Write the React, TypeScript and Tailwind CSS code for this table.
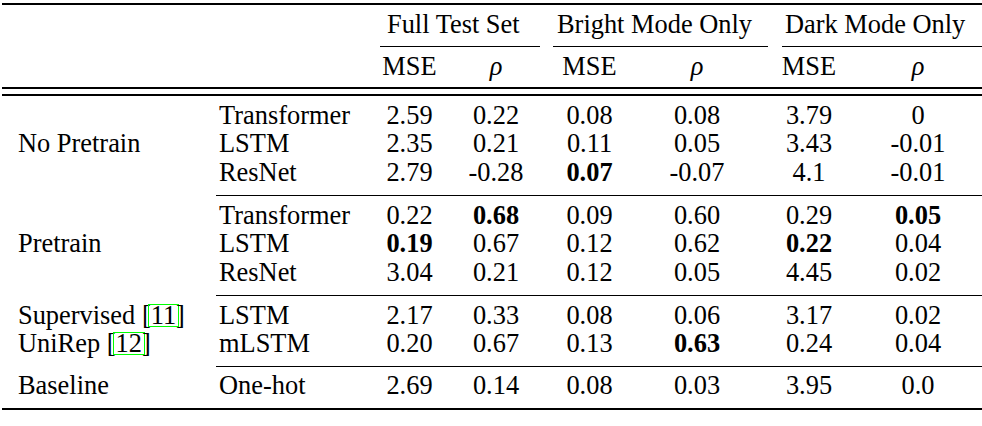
import React from 'react';

// results table: MSE / Spearman rho for each split

type Val = { v: string; bold?: boolean };

const n = (v: string): Val => ({ v });
const b = (v: string): Val => ({ v, bold: true });

interface Row {
  model: string;
  vals: Val[];
}

interface Group {
  label?: React.ReactNode;
  rows: Row[];
  perRow?: React.ReactNode[];
  last?: boolean;
}

const cols = 'grid grid-cols-[216px_150px_87px_86px_101px_114px_110px_108px_1fr]';

function Cite({ n }: { n: string }) {
  return (
    <>
      [
      <span className="inline-block leading-[21px] -mx-[2px] px-[2px] outline-1 outline-[#00ff00]">{n}</span>]
    </>
  );
}

const groups: Group[] = [
  {
    label: 'No Pretrain',
    rows: [
      { model: 'Transformer', vals: [n('2.59'), n('0.22'), n('0.08'), n('0.08'), n('3.79'), n('0')] },
      { model: 'LSTM', vals: [n('2.35'), n('0.21'), n('0.11'), n('0.05'), n('3.43'), n('-0.01')] },
      { model: 'ResNet', vals: [n('2.79'), n('-0.28'), b('0.07'), n('-0.07'), n('4.1'), n('-0.01')] },
    ],
  },
  {
    label: 'Pretrain',
    rows: [
      { model: 'Transformer', vals: [n('0.22'), b('0.68'), n('0.09'), n('0.60'), n('0.29'), b('0.05')] },
      { model: 'LSTM', vals: [b('0.19'), n('0.67'), n('0.12'), n('0.62'), b('0.22'), n('0.04')] },
      { model: 'ResNet', vals: [n('3.04'), n('0.21'), n('0.12'), n('0.05'), n('4.45'), n('0.02')] },
    ],
  },
  {
    perRow: [
      <>Supervised <Cite n="11" /></>,
      <>UniRep <Cite n="12" /></>,
    ],
    rows: [
      { model: 'LSTM', vals: [n('2.17'), n('0.33'), n('0.08'), n('0.06'), n('3.17'), n('0.02')] },
      { model: 'mLSTM', vals: [n('0.20'), n('0.67'), n('0.13'), b('0.63'), n('0.24'), n('0.04')] },
    ],
  },
  {
    perRow: ['Baseline'],
    rows: [{ model: 'One-hot', vals: [n('2.69'), n('0.14'), n('0.08'), n('0.03'), n('3.95'), n('0.0')] }],
    last: true,
  },
];

function Rho() {
  return <span className="italic">ρ</span>;
}

function Cells({ row }: { row: Row }) {
  return (
    <>
      <div className="pl-[3px] whitespace-nowrap">{row.model}</div>
      {row.vals.map((c, i) => (
        <div key={i} className={`text-center ${c.bold ? 'font-bold' : ''}`}>
          {c.v}
        </div>
      ))}
      <div />
    </>
  );
}

function GroupBlock({ g }: { g: Group }) {
  return (
    <div className={`${cols} ${g.last ? 'pt-[4px] pb-[8px]' : 'pt-[5px] pb-[7.6px]'}`}>
      {g.rows.map((row, i) => (
        <React.Fragment key={i}>
          {g.perRow ? (
            <div className="pl-[18px] whitespace-nowrap">{g.perRow[i]}</div>
          ) : i === 0 ? (
            <div className="pl-[18px] row-span-3 self-center whitespace-nowrap">{g.label}</div>
          ) : null}
          <Cells row={row} />
        </React.Fragment>
      ))}
    </div>
  );
}

export default function App() {
  return (
    <div className="w-[982px] h-[426px] bg-white text-black font-['Liberation_Serif','Times_New_Roman',serif] text-[26.4px] leading-[28.8px] pt-[3px]">
      <div className="ml-[2px] h-[2px] bg-black" />

      {/* header: split names */}
      <div className={`${cols} pt-[5px]`}>
        <div />
        <div />
        <div className="col-span-2 pl-[21px] whitespace-nowrap">Full Test Set</div>
        <div className="col-span-2 pl-[18px] whitespace-nowrap">Bright Mode Only</div>
        <div className="col-span-2 pl-[31px] whitespace-nowrap">Dark Mode Only</div>
      </div>
      <div className="flex mt-[7px] h-px">
        <div className="ml-[380px] w-[160px] bg-black" />
        <div className="ml-[13px] w-[215px] bg-black" />
        <div className="ml-[14px] flex-1 bg-black" />
      </div>

      {/* header: metrics */}
      <div className={`${cols} pt-[5px]`}>
        <div />
        <div />
        <div className="text-center">MSE</div>
        <div className="text-center"><Rho /></div>
        <div className="text-center">MSE</div>
        <div className="text-center"><Rho /></div>
        <div className="text-center">MSE</div>
        <div className="text-center"><Rho /></div>
      </div>

      <div className="ml-[2px] mt-[6px] h-[2px] bg-black" />
      <div className="ml-[2px] mt-[5px] h-[2px] bg-black" />

      {groups.map((g, i) => (
        <React.Fragment key={i}>
          {i > 0 && <div className="ml-[216px] h-px bg-black" />}
          <GroupBlock g={g} />
        </React.Fragment>
      ))}

      <div className="ml-[2px] h-[2px] bg-black" />
    </div>
  );
}
